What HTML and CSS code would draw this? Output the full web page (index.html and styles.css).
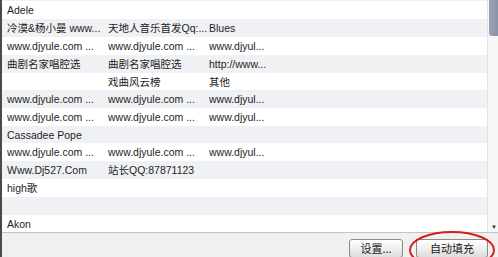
FILE: index.html
```html
<!DOCTYPE html>
<html>
<head>
<meta charset="utf-8">
<link rel="stylesheet" href="styles.css">
</head>
<body>
<div class="window">
  <div class="listarea">
    <div class="list">
      <div class="topstrip"></div>
      <div class="row r18"><span class="c">Adele</span><span class="c"></span><span class="c"></span></div>
      <div class="row alt r18"><span class="c">冷漠&amp;杨小曼 www...</span><span class="c">天地人音乐首发Qq:...</span><span class="c">Blues</span></div>
      <div class="row r18"><span class="c">www.djyule.com ...</span><span class="c">www.djyule.com ...</span><span class="c">www.djyul...</span></div>
      <div class="row alt r18"><span class="c">曲剧名家唱腔选</span><span class="c">曲剧名家唱腔选</span><span class="c">http://www...</span></div>
      <div class="row r17"><span class="c"></span><span class="c">戏曲风云榜</span><span class="c">其他</span></div>
      <div class="row alt r18"><span class="c">www.djyule.com ...</span><span class="c">www.djyule.com ...</span><span class="c">www.djyul...</span></div>
      <div class="row r18"><span class="c">www.djyule.com ...</span><span class="c">www.djyule.com ...</span><span class="c">www.djyul...</span></div>
      <div class="row alt r17"><span class="c">Cassadee Pope</span><span class="c"></span><span class="c"></span></div>
      <div class="row r18"><span class="c">www.djyule.com ...</span><span class="c">www.djyule.com ...</span><span class="c">www.djyul...</span></div>
      <div class="row alt r18"><span class="c">Www.Dj527.Com</span><span class="c">站长QQ:87871123</span><span class="c"></span></div>
      <div class="row r18"><span class="c">high歌</span><span class="c"></span><span class="c"></span></div>
      <div class="row alt r18"><span class="c"></span><span class="c"></span><span class="c"></span></div>
      <div class="row r17"><span class="c">Akon</span><span class="c"></span><span class="c"></span></div>
    </div>
    <div class="scrollbar">
      <div class="thumb"></div>
      <div class="track"></div>
      <div class="arrow">▼</div>
    </div>
  </div>
  <div class="footer">
    <button class="btn btn-set">设置...</button>
    <button class="btn btn-auto">自动填充</button>
  </div>
  <svg class="circle" width="100" height="40" viewBox="0 0 100 40">
    <ellipse cx="48" cy="21" rx="42" ry="18" fill="none" stroke="#d11f1f" stroke-width="2"/>
  </svg>
</div>
</body>
</html>
```

FILE: styles.css
```css
html, body {
  margin: 0;
  padding: 0;
  width: 498px;
  height: 257px;
  overflow: hidden;
  background: #f0f0f0;
}
.window {
  position: relative;
  width: 496px;
  height: 257px;
  border-left: 2px solid #4a4a4a;
  display: flex;
  flex-direction: column;
  font-family: "Liberation Sans", "Noto Sans CJK SC", sans-serif;
  font-size: 10.5px;
  color: #1e1e1e;
}
.listarea {
  display: flex;
  height: 233px;
  background: #fff;
  border-bottom: 1px solid #c4c4c4;
  box-sizing: border-box;
}
.list {
  width: 485px;
  display: flex;
  flex-direction: column;
}
.topstrip {
  height: 1px;
  background: #eff0f3;
}
.row {
  display: grid;
  grid-template-columns: 101px 101px 101px 1fr;
  align-items: center;
  padding-left: 5px;
  box-sizing: border-box;
  background: #fff;
}
.row.alt { background: #eff1f4; }
.r18 { height: 18px; }
.r17 { height: 17px; }
.c {
  white-space: nowrap;
  overflow: hidden;
  line-height: 12px;
}
.scrollbar {
  width: 11px;
  display: flex;
  flex-direction: column;
  border-left: 1px solid #e2e3e6;
  background: #f7f7f8;
  box-sizing: border-box;
}
.thumb {
  margin-left: 1px;
  height: 36px;
  background: linear-gradient(to right, #9aa2b5, #8a93a9);
  border-radius: 0 0 0 3px;
}
.track { flex: 1; }
.arrow {
  height: 10px;
  font-size: 6px;
  line-height: 10px;
  color: #333;
  padding-left: 3px;
}
.footer {
  flex: 1;
  display: flex;
  justify-content: flex-end;
  align-items: flex-end;
  gap: 13px;
  padding-right: 10px;
}
.btn {
  height: 19px;
  margin-bottom: -1px;
  border: 1px solid #8a8a8a;
  border-radius: 3px;
  background: linear-gradient(#ffffff, #ececec 60%, #dcdcdc);
  font-family: "Noto Sans CJK SC", sans-serif;
  font-size: 11px;
  color: #222;
  padding: 0;
  line-height: 17px;
}
.btn-set { width: 54px; }
.btn-auto { width: 72px; }
.circle {
  position: absolute;
  left: 402px;
  top: 229px;
}
```
